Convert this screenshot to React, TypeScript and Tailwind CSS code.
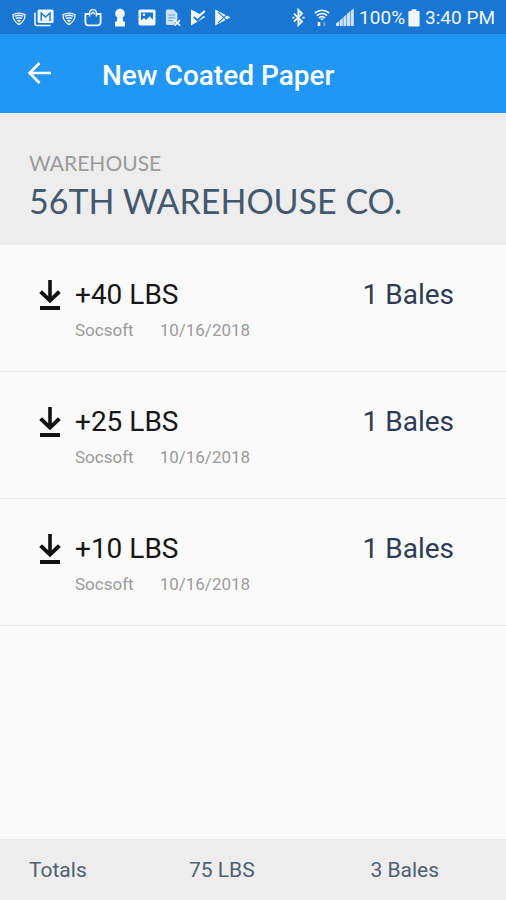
type Entry = { id: number; weight: string; bales: string; user: string; date: string };

const entries: Entry[] = [
  { id: 1, weight: "+40 LBS", bales: "1 Bales", user: "Socsoft", date: "10/16/2018" },
  { id: 2, weight: "+25 LBS", bales: "1 Bales", user: "Socsoft", date: "10/16/2018" },
  { id: 3, weight: "+10 LBS", bales: "1 Bales", user: "Socsoft", date: "10/16/2018" },
];

function ShieldWifiIcon() {
  return (
    <svg width="14" height="20" viewBox="0 0 14 20" fill="none" stroke="currentColor" strokeWidth="1.3">
      <path d="M1 6.6Q7 3.6 13 6.6C13.2 11.2 10.6 14.4 7 16.6C3.4 14.4 .8 11.2 1 6.6Z" />
      <path d="M2.8 8.2Q7 6.4 11.2 8.2M3.8 10.6Q7 9 10.2 10.6" strokeWidth="1.6" />
      <path d="M4.8 12.2Q7 11.2 9.2 12.2L7 14.6Z" fill="currentColor" stroke="none" />
    </svg>
  );
}

function MailIcon() {
  return (
    <svg width="20" height="20" viewBox="0 0 20 20" fill="none" stroke="currentColor">
      <path d="M1 4.5V15.5Q1 17.5 3 17.5H16.5" strokeWidth="1.6" />
      <rect x="3.6" y="1.5" width="16" height="13.5" rx="1.5" fill="currentColor" stroke="none" />
      <path d="M7.2 13V5L11.6 9L16 5V13" stroke="#1976d2" strokeWidth="1.4" />
    </svg>
  );
}

function BagIcon() {
  return (
    <svg width="18" height="20" viewBox="0 0 18 20" fill="none" stroke="currentColor" strokeWidth="1.8">
      <path d="M5 6H1.4V14Q1.4 17.4 4.8 17.4H13.2Q16.6 17.4 16.6 14V6H13" />
      <path d="M5.6 8.4V5Q5.6 1.6 9 1.6T12.4 5V8.4" strokeWidth="1.4" />
      <path d="M6.8 6.2L9 4.2L11.2 6.2" strokeWidth="1.4" />
    </svg>
  );
}

function KeyholeIcon() {
  return (
    <svg width="12" height="20" viewBox="0 0 12 20" fill="currentColor">
      <path d="M6 .8A4.8 4.8 0 0 1 8.6 9.6L9.2 13.5H11V18.6H1V13.5H2.8L3.4 9.6A4.8 4.8 0 0 1 6 .8Z" />
    </svg>
  );
}

function PictureIcon() {
  return (
    <svg width="18" height="20" viewBox="0 0 18 20">
      <rect x=".5" y="1.5" width="17" height="16" rx="1.8" fill="currentColor" />
      <path d="M3 4.4H15V11.5L11.5 8.6L8 12L6 10L3 12.6Z" fill="#1976d2" />
      <circle cx="6" cy="6.8" r="1.3" fill="currentColor" />
    </svg>
  );
}

function DocumentIcon() {
  return (
    <svg width="18" height="20" viewBox="0 0 18 20" fill="none">
      <path d="M3.4 1.4H9.6L13.4 5.4V11.2L10 17H3.4Q1.9 17 1.9 15.5V2.9Q1.9 1.4 3.4 1.4Z" fill="currentColor" opacity=".85" />
      <path d="M4.2 7H11.2M4.2 9.8H11.2M4.2 12.6H8.6" stroke="#1976d2" strokeWidth="1" opacity=".6" />
      <path d="M10.6 12.2L16 17.6M16 12.2L10.6 17.6" stroke="currentColor" strokeWidth="1.8" />
    </svg>
  );
}

function CheckFlagIcon() {
  return (
    <svg width="16" height="20" viewBox="0 0 16 20">
      <path d="M1 1.4L15.4 9L1 17.6Z" fill="currentColor" />
      <path d="M4 8.6L7.4 12L15.4 4.4" fill="none" stroke="#1976d2" strokeWidth="2.4" />
      <path d="M4.4 6.8L7.4 9.6L14.8 3" fill="none" stroke="currentColor" strokeWidth="2.2" />
    </svg>
  );
}

function PlayIcon() {
  return (
    <svg width="17" height="20" viewBox="0 0 17 20">
      <path d="M1.2 1.4L16.4 9.5L1.2 17.6Z" fill="currentColor" />
      <path d="M4 4.2L13 12.4M4 14.8L13 6.6" stroke="#1976d2" strokeWidth="1.1" />
    </svg>
  );
}

function BluetoothIcon() {
  return (
    <svg width="13" height="20" viewBox="0 0 13 20" fill="none" stroke="currentColor" strokeWidth="1.9">
      <path d="M2 5.6L10 13.6L6.4 17V2L10 5.6L2 13.6" />
      <path d="M.2 9.6H2.4M10.4 9.6H12.6" />
    </svg>
  );
}

function WifiIcon() {
  return (
    <svg width="16" height="20" viewBox="0 0 16 20" fill="none" stroke="currentColor" strokeWidth="1.6">
      <path d="M.8 5Q8 -.6 15.2 5M2.8 7.6Q8 3.4 13.2 7.6M4.8 10Q8 7.4 11.2 10" />
      <path d="M6 10.4H10L8 12.8Z" fill="currentColor" stroke="none" />
      <path d="M5 18V14" strokeWidth="2.6" />
      <path d="M10.4 13.8V18" opacity=".4" strokeWidth="2" />
    </svg>
  );
}

function SignalIcon() {
  return (
    <svg width="18" height="20" viewBox="0 0 18 20" fill="currentColor">
      <path d="M0 15.4L3.2 13V18H0ZM3.8 12.4L6.8 9.8V18H3.8ZM7.4 9.2L10.4 6.6V18H7.4ZM11 6L14 3.6V18H11ZM14.6 3L17.8 .6V18H14.6Z" opacity=".85" />
    </svg>
  );
}

function BatteryIcon() {
  return (
    <svg width="12" height="20" viewBox="0 0 12 20" fill="currentColor">
      <path d="M3.6 1.2H8.4V3H10.6Q11.6 3 11.6 4V17.4Q11.6 18.4 10.6 18.4H1.4Q.4 18.4 .4 17.4V4Q.4 3 1.4 3H3.6Z" />
    </svg>
  );
}

function StatusBar() {
  return (
    <div className="flex h-[34px] shrink-0 items-center justify-between bg-[#1976d2] pt-0.5 pr-[11px] pl-3 text-[#f1f7fd]">
      <div className="flex items-center gap-2">
        <ShieldWifiIcon />
        <MailIcon />
        <ShieldWifiIcon />
        <BagIcon />
        <span className="mx-1">
          <KeyholeIcon />
        </span>
        <PictureIcon />
        <DocumentIcon />
        <CheckFlagIcon />
        <PlayIcon />
      </div>
      <div className="flex items-center">
        <BluetoothIcon />
        <span className="ml-[9px]">
          <WifiIcon />
        </span>
        <span className="ml-[6px]">
          <SignalIcon />
        </span>
        <span className="ml-[5px] text-[19px] leading-5">100%</span>
        <span className="ml-[3px]">
          <BatteryIcon />
        </span>
        <span className="ml-[5px] text-[19px] leading-5">3:40 PM</span>
      </div>
    </div>
  );
}

function ReceivedIcon() {
  return (
    <svg width="24" height="32" viewBox="0 0 24 32" fill="none" stroke="#111111" className="shrink-0">
      <path d="M12 1V22" strokeWidth="3.6" />
      <path d="M2.6 12.6L12 21.6L21.4 12.6" strokeWidth="4" />
      <path d="M2 29H22" strokeWidth="4" />
    </svg>
  );
}

function EntryRow({ entry }: { entry: Entry }) {
  return (
    <li className="flex h-[127px] items-start border-b border-[#e9e9e9] pt-8 pr-[52px] pl-[38px]">
      <span className="pt-0.5">
        <ReceivedIcon />
      </span>
      <div className="ml-[13px] flex-1">
        <p className="text-[28px] leading-9 text-[#161616]">{entry.weight}</p>
        <p className="mt-[5px] flex gap-[26px] text-[17px] leading-6 text-[#9b9b9b]">
          <span>{entry.user}</span>
          <span>{entry.date}</span>
        </p>
      </div>
      <p className="text-[28px] leading-9 text-[#2f3a54]">{entry.bales}</p>
    </li>
  );
}

export default function App() {
  return (
    <div className="flex min-h-screen flex-col bg-[#fafafa] font-['Roboto',sans-serif]">
      <StatusBar />

      <header className="flex h-[79px] shrink-0 items-center bg-[#2196f3] pl-[27px] text-white">
        <button type="button" aria-label="Back" className="pb-0.5">
          <svg width="25" height="24" viewBox="0 0 25 24" fill="none" stroke="currentColor" strokeWidth="2.7">
            <path d="M24 12H3M12.6 2L2.6 12L12.6 22" />
          </svg>
        </button>
        <h1 className="ml-[50px] pt-1 text-[28px] leading-9 font-medium">New Coated Paper</h1>
      </header>

      <section className="h-[132px] shrink-0 bg-[#ededed] px-[29px] pt-[38px] font-['Lato',sans-serif]">
        <p className="text-[21px] leading-6 text-[#9a9a9a]">WAREHOUSE</p>
        <h2 className="mt-1.5 text-[34px] leading-10 text-[#44596e]">56TH WAREHOUSE CO.</h2>
      </section>

      <ul className="flex-1">
        {entries.map((entry) => (
          <EntryRow key={entry.id} entry={entry} />
        ))}
      </ul>

      <footer className="flex h-[61px] shrink-0 items-center bg-[#ededed] pt-0.5 pr-[67px] pl-[29px] text-[21px] text-[#50606f]">
        <span className="w-40">Totals</span>
        <span className="flex-1">75 LBS</span>
        <span>3 Bales</span>
      </footer>
    </div>
  );
}
